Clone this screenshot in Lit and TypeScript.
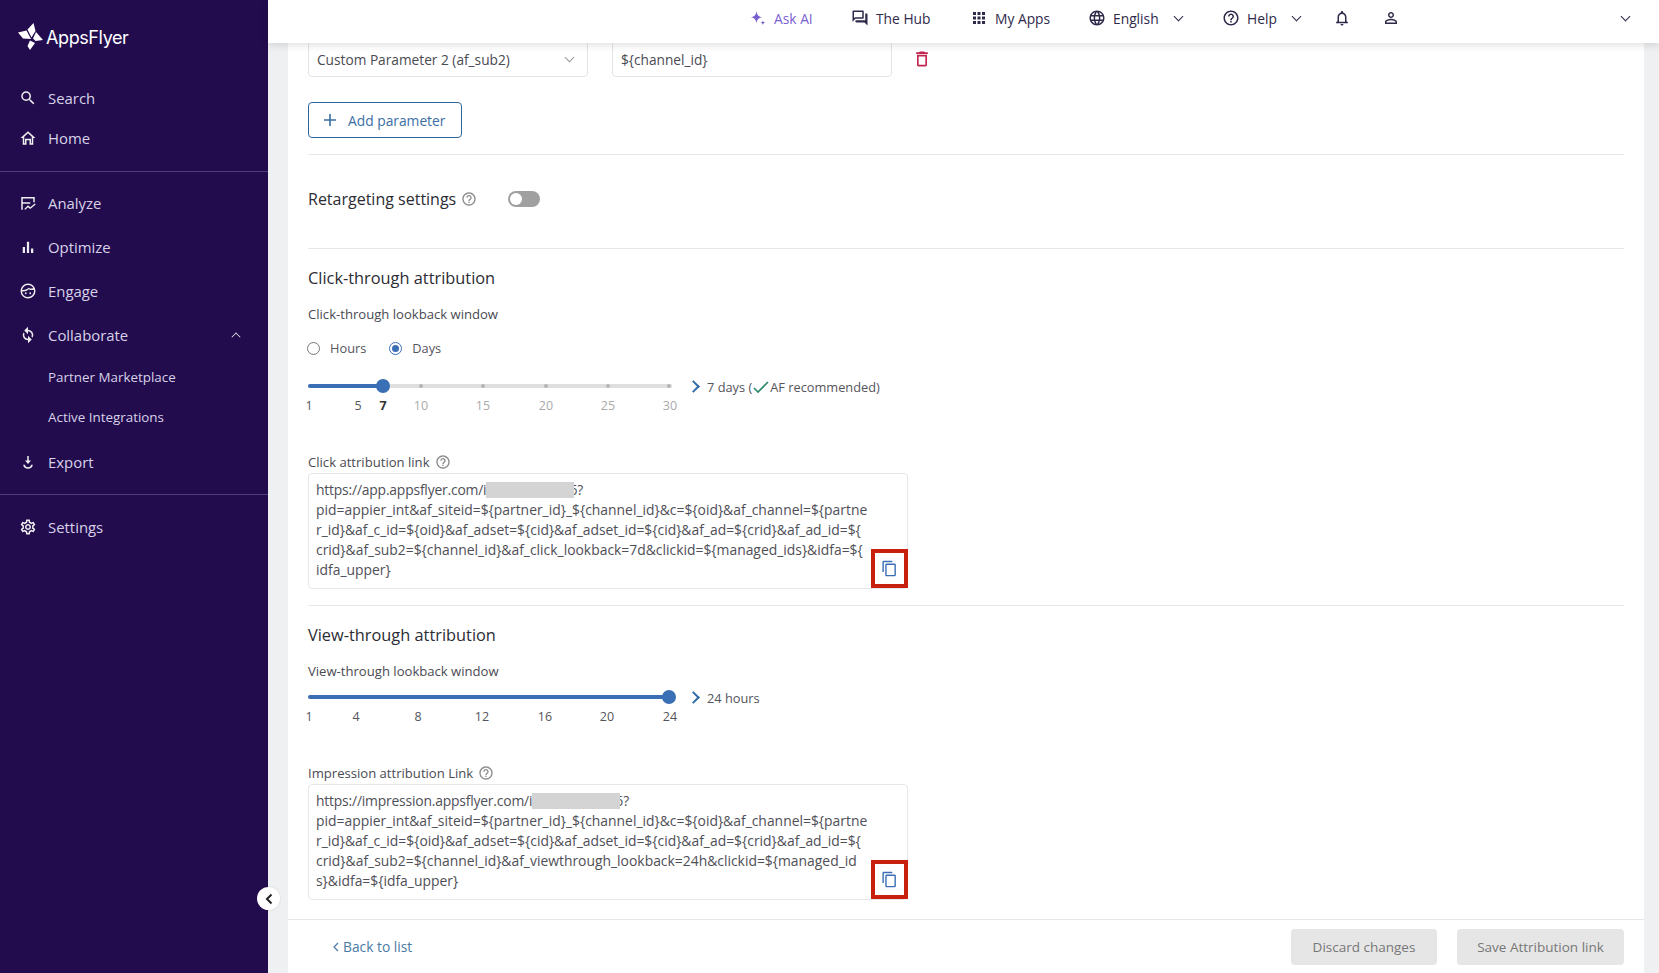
import { LitElement, html, css, svg } from "lit";
import { customElement } from "lit/decorators.js";

const ic = (d: any, size = 18, vb = 24) => html`<svg width=${size} height=${size} viewBox="0 0 ${vb} ${vb}" fill="currentColor">${d}</svg>`;
const icons: Record<string, any> = {
  search: svg`<path d="M15.500 14h-.79l-.28-.27A6.471 6.471 0 0 0 16 9.500 6.500 6.500 0 1 0 9.500 16c1.610 0 3.090-.59 4.230-1.570l.27.28v.79l5 4.990L20.490 19l-4.990-5zm-6 0C7.010 14 5 11.990 5 9.500S7.010 5 9.500 5 14 7.010 14 9.500 11.990 14 9.500 14z"/>`,
  home: svg`<path d="M12 3 2 12h3v9h5v-6h4v6h5v-9h3L12 3zm5 16h-1v-6H8v6H7v-8.800l5-4.500 5 4.500V19z"/>`,
  analyze: svg`<path d="M3 4h18v7h-2V6H5v5h10v2H5v8H3V4z"/><path d="m7 20 5-5 3 2.500 6-5 1.200 1.400-7.200 6-3-2.400-3.600 3.600z"/>`,
  optimize: svg`<path d="M5 12h3v8H5zM10.500 5h3v15h-3zM16 14h3v6h-3z"/>`,
  engage: svg`<path fill-rule="evenodd" d="M12 2a10 10 0 1 0 0 20 10 10 0 0 0 0-20zm0 2c3 0 5.600 1.600 7 4-2 1.300-4.500 1-6-.4C11.500 9.500 8 11 4.100 10.500 4.800 6.800 8 4 12 4zm0 16a8 8 0 0 1-8-7.500c3.500.3 6.800-.8 9-2.900 2.200 1.300 4.800 1.500 7 .6.100.5 0 1.200 0 1.800a8 8 0 0 1-8 8z"/><circle cx="9" cy="15" r="1.200"/><circle cx="15" cy="15" r="1.200"/>`,
  collab: svg`<path d="M12 5V1L7 6l5 5V7a5 5 0 0 1 4.600 7l1.500 1.500A7 7 0 0 0 12 5zM12 17a5 5 0 0 1-4.600-7L5.900 8.500A7 7 0 0 0 12 19v4l5-5-5-5v4z"/>`,
  exportI: svg`<path d="M11 4h2v6h3l-4 4.500L8 10h3V4z"/><path d="M5.500 14h2.300a4.300 4.300 0 0 0 8.400 0h2.300a6.600 6.600 0 0 1-13 0z" transform="translate(0 1.500)"/>`,
  gear: svg`<path d="M19.430 12.980c.04-.32.07-.64.07-.98 0-.34-.03-.66-.07-.98l2.110-1.650c.19-.15.24-.42.12-.64l-2-3.460c-.09-.16-.26-.25-.44-.25-.06 0-.12.01-.17.03l-2.490 1c-.52-.4-1.080-.73-1.690-.98l-.38-2.650C14.460 2.180 14.250 2 14 2h-4c-.25 0-.46.18-.49.42l-.38 2.650c-.61.25-1.170.59-1.690.98l-2.490-1c-.06-.02-.12-.03-.18-.03-.17 0-.34.09-.43.25l-2 3.460c-.13.22-.07.49.12.64l2.110 1.650c-.04.32-.07.65-.07.98 0 .33.03.66.07.98l-2.110 1.650c-.19.15-.24.42-.12.64l2 3.460c.09.16.26.25.44.25.06 0 .12-.01.17-.03l2.490-1c.52.4 1.080.73 1.690.98l.38 2.650c.03.24.24.42.49.42h4c.25 0 .46-.18.49-.42l.38-2.650c.61-.25 1.170-.59 1.690-.98l2.490 1c.06.02.12.03.18.03.17 0 .34-.09.43-.25l2-3.460c.12-.22.07-.49-.12-.64l-2.110-1.650zm-1.980-1.710c.04.31.05.52.05.73 0 .21-.02.43-.05.73l-.14 1.130.89.7 1.080.84-.7 1.210-1.270-.51-1.040-.42-.9.68c-.43.32-.84.56-1.250.73l-1.060.43-.16 1.130-.2 1.350h-1.400l-.19-1.350-.16-1.130-1.060-.43c-.43-.18-.83-.41-1.230-.71l-.91-.7-1.060.43-1.270.51-.7-1.210 1.080-.84.89-.7-.14-1.130c-.03-.31-.05-.54-.05-.74s.02-.43.05-.73l.14-1.130-.89-.7-1.080-.84.7-1.210 1.270.51 1.040.42.9-.68c.43-.32.84-.56 1.250-.73l1.060-.43.16-1.130.2-1.350h1.390l.19 1.350.16 1.130 1.060.43c.43.18.83.41 1.230.71l.91.7 1.060-.43 1.270-.51.7 1.210-1.070.85-.89.7.14 1.130zM12 8c-2.210 0-4 1.790-4 4s1.790 4 4 4 4-1.790 4-4-1.790-4-4-4zm0 6c-1.100 0-2-.9-2-2s.9-2 2-2 2 .9 2 2-.9 2-2 2z"/>`,
  spark: svg`<path d="M10 3c.8 5 2.500 7 7.500 8-5 1-6.700 3-7.500 8-.8-5-2.500-7-7.500-8 5-1 6.700-3 7.500-8zM18.500 15c.3 2 1 2.800 3 3.200-2 .4-2.700 1.200-3 3.300-.3-2.100-1-2.900-3-3.300 2-.4 2.700-1.200 3-3.200z"/>`,
  hub: svg`<path d="M15 4v7H5.170L4 12.170V4h11m1-2H3c-.55 0-1 .45-1 1v14l4-4h10c.55 0 1-.45 1-1V3c0-.55-.45-1-1-1zm5 4h-2v9H6v2c0 .55.45 1 1 1h11l4 4V7c0-.55-.45-1-1-1z"/>`,
  apps: svg`<path d="M4 4h4v4H4zM10 4h4v4h-4zM16 4h4v4h-4zM4 10h4v4H4zM10 10h4v4h-4zM16 10h4v4h-4zM4 16h4v4H4zM10 16h4v4h-4zM16 16h4v4h-4z"/>`,
  globe: svg`<path d="M11.990 2C6.470 2 2 6.480 2 12s4.470 10 9.990 10C17.520 22 22 17.520 22 12S17.520 2 11.990 2zm6.930 6h-2.950c-.32-1.250-.78-2.450-1.380-3.560 1.840.63 3.370 1.910 4.330 3.560zM12 4.040c.83 1.200 1.480 2.530 1.910 3.960h-3.820c.43-1.430 1.080-2.760 1.910-3.960zM4.260 14C4.100 13.360 4 12.690 4 12s.1-1.360.26-2h3.380c-.08.66-.14 1.320-.14 2s.06 1.340.14 2H4.260zm.82 2h2.950c.32 1.250.78 2.450 1.380 3.560-1.840-.63-3.370-1.900-4.330-3.560zm2.950-8H5.080c.96-1.660 2.490-2.930 4.330-3.560C8.810 5.550 8.350 6.750 8.030 8zM12 19.960c-.83-1.200-1.480-2.530-1.910-3.960h3.820c-.43 1.430-1.080 2.760-1.910 3.960zM14.340 14H9.660c-.09-.66-.16-1.320-.16-2s.07-1.350.16-2h4.680c.09.65.16 1.320.16 2s-.07 1.340-.16 2zm.25 5.560c.6-1.110 1.060-2.310 1.380-3.560h2.950c-.96 1.650-2.490 2.930-4.330 3.560zM16.360 14c.08-.66.14-1.320.14-2s-.06-1.340-.14-2h3.380c.16.64.26 1.310.26 2s-.1 1.360-.26 2h-3.380z"/>`,
  help: svg`<path d="M11 18h2v-2h-2v2zm1-16C6.480 2 2 6.480 2 12s4.480 10 10 10 10-4.480 10-10S17.520 2 12 2zm0 18c-4.410 0-8-3.590-8-8s3.590-8 8-8 8 3.590 8 8-3.590 8-8 8zm0-14c-2.210 0-4 1.790-4 4h2c0-1.100.9-2 2-2s2 .9 2 2c0 2-3 1.750-3 5h2c0-2.250 3-2.500 3-5 0-2.210-1.790-4-4-4z"/>`,
  bell: svg`<path d="M12 22c1.100 0 2-.9 2-2h-4c0 1.100.9 2 2 2zm6-6v-5c0-3.070-1.630-5.640-4.500-6.320V4c0-.83-.67-1.500-1.500-1.500s-1.500.67-1.500 1.500v.68C7.640 5.360 6 7.920 6 11v5l-2 2v1h16v-1l-2-2zm-2 1H8v-6c0-2.480 1.510-4.500 4-4.500s4 2.020 4 4.500v6z"/>`,
  user: svg`<path d="M12 5.900c1.160 0 2.100.94 2.100 2.100s-.94 2.100-2.100 2.100S9.900 9.160 9.900 8s.94-2.100 2.100-2.100m0 9c2.970 0 6.100 1.460 6.100 2.100v1.100H5.900V17c0-.64 3.130-2.100 6.100-2.100M12 4C9.790 4 8 5.790 8 8s1.790 4 4 4 4-1.790 4-4-1.790-4-4-4zm0 9c-2.670 0-8 1.340-8 4v3h16v-3c0-2.660-5.330-4-8-4z"/>`,
  trash: svg`<path d="M6 19c0 1.100.9 2 2 2h8c1.100 0 2-.9 2-2V7H6v12zM8 9h8v10H8V9zm7.500-5l-1-1h-5l-1 1H5v2h14V4z"/>`,
  copy: svg`<path d="M16 1H4a2 2 0 0 0-2 2v14h2V3h12V1zm3 4H8a2 2 0 0 0-2 2v14c0 1.100.9 2 2 2h11a2 2 0 0 0 2-2V7a2 2 0 0 0-2-2zm0 16H8V7h11v14z"/>`,
};

@customElement("app-root")
export class AppRoot extends LitElement {
  static styles = css`
    :host { display: block; width: 1659px; height: 973px; overflow: hidden; font-family: "Open Sans", "Noto Sans", sans-serif; color: #3a3a44; background: #eef0f2; }
    * { box-sizing: border-box; }
    .app { display: flex; height: 973px; }
    .side { width: 268px; flex: none; background: #220c4e; color: #d8d2e8; position: relative; font-size: 14.9px; }
    .logo { display: flex; align-items: center; height: 46px; margin-top: 14px; padding-left: 18px; gap: 3px; color: #fff; }
    .logotext { font-family: "Inter", sans-serif; font-weight: 400; font-size: 18px; letter-spacing: -0.4px; }
    .nav { display: flex; flex-direction: column; margin-top: 18px; }
    .item { display: flex; align-items: center; height: 40px; padding-left: 19px; gap: 11px; }
    .item svg { flex: none; color: #eee; }
    .item.h44 { height: 44px; }
    .item.exp { margin-top: 3px; }
    .sub { height: 40px; display: flex; align-items: center; padding-left: 48px; font-size: 13.4px; }
    .chev { margin-left: auto; margin-right: 28px; width: 8px; height: 8px; border-left: 1.5px solid #eee; border-top: 1.5px solid #eee; transform: translateY(2px) rotate(45deg) scale(.8); }
    .sep { height: 1px; background: #4f3c78; }
    .sep.one { margin: 13px 0 9px; }
    .sep.two { margin: 10px 0 10px; }
    .collapse { position: absolute; right: -12px; top: 887px; width: 23px; height: 23px; border-radius: 50%; background: #fff; display: flex; align-items: center; justify-content: center; box-shadow: 0 0 2px rgba(0,0,0,.15); z-index: 5; }
    .main { flex: 1; min-width: 0; display: flex; flex-direction: column; }
    .top { height: 43px; flex: none; background: #fff; box-shadow: 0 2px 8px rgba(0,0,0,.13); position: relative; z-index: 3; display: flex; align-items: center; font-size: 13.8px; color: #2f2a4a; padding: 0 0 7px 481px; }
    .top .t { display: flex; align-items: center; gap: 7px; }
    .top .ask { color: #7a5fd0; width: 102px; }
    .top .hub { width: 119px; }
    .top .my { width: 118px; }
    .top .en { width: 134px; }
    .top .hp { width: 111px; }
    .top .bell { width: 49px; }
    .top .usr { width: 231px; }
    .down { display: inline-block; width: 7px; height: 7px; border-right: 1.6px solid #2f2a4a; border-bottom: 1.6px solid #2f2a4a; transform: translateY(-2px) rotate(45deg); margin-left: 9px; }
    .panel { flex: 1; min-height: 0; margin: 0 15px 0 20px; background: #fff; display: flex; flex-direction: column; }
    .scroll { flex: 1; min-height: 0; overflow: hidden; padding: 0 20px; }
    .inner { margin-top: -2px; }
    .row { display: flex; align-items: center; height: 36px; gap: 24px; font-size: 13.7px; }
    .field { border: 1px solid #e2e3e5; border-radius: 4px; height: 36px; display: flex; align-items: center; padding: 0 8px; color: #4a4a52; background: #fff; }
    .sel { width: 280px; justify-content: space-between; padding-right: 14px; }
    .sel i { width: 7px; height: 7px; border-right: 1.4px solid #999; border-bottom: 1.4px solid #999; transform: translateY(-2px) rotate(45deg); }
    .inp { width: 280px; }
    .trash { color: #c2264f; margin-left: -4px; display: flex; }
    .add { margin-top: 25px; width: 154px; height: 36px; border: 1px solid #2f6699; border-radius: 4px; color: #3a6ea5; display: flex; align-items: center; font-size: 13.8px; font-weight: 500; padding-left: 14px; gap: 11px; background: #fff; }
    .hr { height: 1px; background: #e6e7e9; }
    .hr.a { margin-top: 16px; }
    .ret { display: flex; align-items: center; height: 93px; font-size: 16px; color: #2c2c34; padding-bottom: 6px; }
    .ret .q { margin-left: 5px; color: #8a8a8a; display: flex; }
    .toggle { margin-left: 31px; width: 32px; height: 16px; border-radius: 8px; background: #a0a0a0; position: relative; }
    .toggle::after { content: ""; position: absolute; left: 2px; top: 2px; width: 12px; height: 12px; border-radius: 50%; background: #fff; }
    h3 { margin: 0; font-weight: 400; font-size: 16.35px; color: #2c2c34; line-height: 24px; }
    .h1 { padding-top: 17px; }
    .h2 { padding-top: 17px; }
    .lb { font-size: 13.1px; color: #4a4a52; line-height: 18px; display: flex; align-items: center; gap: 5px; }
    .lb svg { color: #8a8a8a; }
    .radios { display: flex; align-items: center; height: 20px; margin-top: 15px; font-size: 12.8px; color: #55555c; }
    .radio { display: flex; align-items: center; gap: 10px; margin-right: 24px; }
    .dot { width: 13px; height: 13px; border-radius: 50%; border: 1px solid #777; background: #fff; margin-left: -1px; }
    .dot.on { border-color: #3a6fb5; position: relative; }
    .dot.on::after { content: ""; position: absolute; inset: 2px; border-radius: 50%; background: #3a6fb5; }
    .sl { display: flex; align-items: flex-start; }
    .track { width: 364px; position: relative; height: 44px; flex: none; }
    .rail { position: absolute; top: 7px; left: 0; right: 0; height: 4px; border-radius: 2px; background: #dfdfdf; }
    .fill { position: absolute; top: 7px; left: 0; height: 4px; border-radius: 2px; background: #3a6fb5; }
    .thumb { position: absolute; top: 2px; width: 14px; height: 14px; margin-left: -7px; border-radius: 50%; background: #3a6fb5; }
    .tick { position: absolute; top: 7px; width: 4px; height: 4px; margin-left: -2px; border-radius: 50%; background: #b5b5b5; }
    .n { position: absolute; top: 20px; font-size: 12.5px; transform: translateX(-50%); color: #55555c; line-height: 18px; }
    .n.off { color: #aaa; }
    .n.b { font-weight: 700; color: #333; }
    .val { display: flex; align-items: center; margin-left: 17px; font-size: 12.8px; color: #55555c; height: 19px; white-space: nowrap; }
    .val .ar { width: 9px; height: 9px; border-top: 2px solid #2f6ba8; border-right: 2px solid #2f6ba8; transform: rotate(45deg); margin-right: 9px; }
    .val svg { margin: 0 1px 0 1px; }
    .box { position: relative; width: 600px; height: 116px; border: 1px solid #e6e7e9; border-radius: 4px; padding: 6px 7px; font-size: 13.9px; line-height: 20px; color: #4f4f57; margin-top: 2px; }
    .line { white-space: nowrap; height: 20px; }
    .url { letter-spacing: -0.2px; }
    .redact { position: relative; display: inline-block; width: 88px; height: 16px; background: #d4d4d4; vertical-align: -3px; margin-right: -5px; }
    .copy { position: absolute; right: -1px; bottom: 0; width: 37px; height: 39px; border: 4px solid #c7200f; color: #3a6fb5; display: flex; align-items: center; justify-content: center; }
    .foot { height: 54px; flex: none; border-top: 1px solid #e6e7e9; display: flex; align-items: center; padding: 0 20px 0 45px; background: #fff; }
    .back { color: #4a7ba6; font-size: 13.8px; display: flex; align-items: center; gap: 4px; }
    .btn { height: 36px; border-radius: 4px; background: #e6e6e6; color: #777; font-size: 13.5px; display: flex; align-items: center; justify-content: center; }
    .spacer { flex: 1; }
  `;

  private slider(items: [string, number, string?][], pos: number, ticks: number[]) {
    return html`<div class="track">
      <div class="rail"></div>
      <div class="fill" style="width:${pos}px"></div>
      ${ticks.map((t) => html`<div class="tick" style="left:${t}px"></div>`)}
      <div class="thumb" style="left:${pos}px"></div>
      ${items.map(([l, x, c]) => html`<span class="n ${c || ""}" style="left:${x}px">${l}</span>`)}
    </div>`;
  }

  private item(icon: string, label: string, cls = "") {
    return html`<div class="item ${cls}">${ic(icons[icon], 18)}<span>${label}</span></div>`;
  }

  private q() {
    return ic(icons.help, 16);
  }

  private copy() {
    return html`<div class="copy">${ic(icons.copy, 17)}</div>`;
  }

  render() {
    return html`<div class="app">
      <aside class="side">
        <div class="logo">
          <svg width="25" height="28" viewBox="0 0 25 28" fill="#fff">
            <path d="M0 9.500 8.500 7.500 13 16 5 15.500z"/><path d="M9.500 6.500 15.500 0 17.500 8 13.500 14.500z"/><path d="M15 15.500 18 9 25 17 17.500 18z" /><path d="M12 17.500 17 20 12 27 9.500 23z"/>
          </svg>
          <span class="logotext">AppsFlyer</span>
        </div>
        <nav class="nav">
          ${this.item("search", "Search")}
          ${this.item("home", "Home")}
          <div class="sep one"></div>
          ${this.item("analyze", "Analyze", "h44")}
          ${this.item("optimize", "Optimize", "h44")}
          ${this.item("engage", "Engage", "h44")}
          <div class="item h44">${ic(icons.collab, 18)}<span>Collaborate</span><i class="chev"></i></div>
          <div class="sub">Partner Marketplace</div>
          <div class="sub">Active Integrations</div>
          ${this.item("exportI", "Export", "h44 exp")}
          <div class="sep two"></div>
          ${this.item("gear", "Settings", "h44")}
        </nav>
        <div class="collapse"><svg width="10" height="12" viewBox="0 0 10 12"><path d="M7.500 1.500 3 6l4.500 4.500" fill="none" stroke="#222" stroke-width="2"/></svg></div>
      </aside>
      <div class="main">
        <header class="top">
          <div class="t ask">${ic(icons.spark)}<span>Ask AI</span></div>
          <div class="t hub">${ic(icons.hub)}<span>The Hub</span></div>
          <div class="t my">${ic(icons.apps)}<span>My Apps</span></div>
          <div class="t en">${ic(icons.globe)}<span>English</span><i class="down"></i></div>
          <div class="t hp">${ic(icons.help)}<span>Help</span><i class="down"></i></div>
          <div class="t bell">${ic(icons.bell)}</div>
          <div class="t usr">${ic(icons.user)}</div>
          <i class="down"></i>
        </header>
        <section class="panel">
          <div class="scroll"><div class="inner">
            <div class="row">
              <div class="field sel"><span>Custom Parameter 2 (af_sub2)</span><i></i></div>
              <div class="field inp">\${channel_id}</div>
              <div class="trash">${ic(icons.trash, 20)}</div>
            </div>
            <div class="add"><svg width="14" height="14" viewBox="0 0 14 14"><path d="M7 1v12M1 7h12" stroke="#3a6ea5" stroke-width="1.600"/></svg><span>Add parameter</span></div>
            <div class="hr a"></div>
            <div class="ret"><span>Retargeting settings</span><span class="q">${this.q()}</span><div class="toggle"></div></div>
            <div class="hr"></div>
            <div class="h1"><h3>Click-through attribution</h3></div>
            <div class="lb" style="margin-top:15px">Click-through lookback window</div>
            <div class="radios">
              <label class="radio"><span class="dot"></span>Hours</label>
              <label class="radio"><span class="dot on"></span>Days</label>
            </div>
            <div class="sl" style="margin-top:19px">
              ${this.slider([["1", 1], ["5", 50], ["7", 75, "b"], ["10", 113, "off"], ["15", 175, "off"], ["20", 238, "off"], ["25", 300, "off"], ["30", 362, "off"]], 75, [113, 175, 238, 300, 361])}
              <div class="val"><i class="ar"></i>7 days (<svg width="16" height="14" viewBox="0 0 16 14"><path d="M1 8l4 4 10-10" fill="none" stroke="#2f8a6a" stroke-width="1.700"/></svg>AF recommended)</div>
            </div>
            <div class="lb" style="margin-top:32px">Click attribution link ${this.q()}</div>
            <div class="box">
              <div class="line"><span class="url">https://app.appsflyer.com/i</span><span class="redact"></span>6?</div>
              <div class="line">pid=appier_int&amp;af_siteid=\${partner_id}_\${channel_id}&amp;c=\${oid}&amp;af_channel=\${partne</div>
              <div class="line">r_id}&amp;af_c_id=\${oid}&amp;af_adset=\${cid}&amp;af_adset_id=\${cid}&amp;af_ad=\${crid}&amp;af_ad_id=\${</div>
              <div class="line">crid}&amp;af_sub2=\${channel_id}&amp;af_click_lookback=7d&amp;clickid=\${managed_ids}&amp;idfa=\${</div>
              <div class="line">idfa_upper}</div>
              ${this.copy()}
            </div>
            <div class="hr" style="margin-top:16px"></div>
            <div class="h2"><h3>View-through attribution</h3></div>
            <div class="lb" style="margin-top:15px">View-through lookback window</div>
            <div class="sl" style="margin-top:8px">
              ${this.slider([["1", 1], ["4", 48], ["8", 110], ["12", 174], ["16", 237], ["20", 299], ["24", 362]], 361, [])}
              <div class="val"><i class="ar"></i>24 hours</div>
            </div>
            <div class="lb" style="margin-top:32px">Impression attribution Link ${this.q()}</div>
            <div class="box">
              <div class="line"><span class="url">https://impression.appsflyer.com/i</span><span class="redact"></span>6?</div>
              <div class="line">pid=appier_int&amp;af_siteid=\${partner_id}_\${channel_id}&amp;c=\${oid}&amp;af_channel=\${partne</div>
              <div class="line">r_id}&amp;af_c_id=\${oid}&amp;af_adset=\${cid}&amp;af_adset_id=\${cid}&amp;af_ad=\${crid}&amp;af_ad_id=\${</div>
              <div class="line">crid}&amp;af_sub2=\${channel_id}&amp;af_viewthrough_lookback=24h&amp;clickid=\${managed_id</div>
              <div class="line">s}&amp;idfa=\${idfa_upper}</div>
              ${this.copy()}
            </div>
          </div></div>
          <footer class="foot">
            <span class="back"><svg width="6" height="10" viewBox="0 0 6 10"><path d="M5 1 1 5l4 4" fill="none" stroke="#4a7ba6" stroke-width="1.200"/></svg>Back to list</span>
            <span class="spacer"></span>
            <div class="btn" style="width:146px">Discard changes</div>
            <div class="btn" style="width:167px;margin-left:20px">Save Attribution link</div>
          </footer>
        </section>
      </div>
    </div>`;
  }
}
